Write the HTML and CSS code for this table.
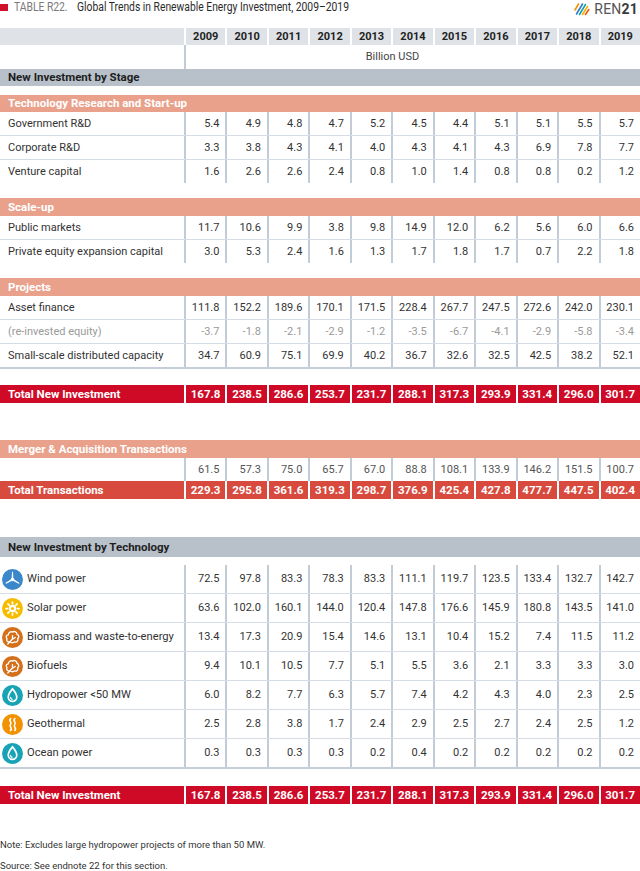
FILE: index.html
```html
<!DOCTYPE html>
<html>
<head>
<meta charset="utf-8">
<link rel="stylesheet" href="styles.css">
</head>
<body>
<div class="top">
  <div class="sq"></div>
  <div class="ttl"><span class="tag">TABLE R22.</span><span class="name">Global Trends in Renewable Energy Investment, 2009–2019</span></div>
  <div class="logo">
    <svg width="16" height="14" viewBox="0 0 16 14">
      <g stroke-width="1.6" stroke-linecap="round">
        <line x1="1" y1="8" x2="4.5" y2="2" stroke="#f39200"/>
        <line x1="2.5" y1="12" x2="8.5" y2="2" stroke="#2f7fc1"/>
        <line x1="5.5" y1="12.5" x2="11.5" y2="2.5" stroke="#1aa0b0"/>
        <line x1="8.5" y1="12.5" x2="13.5" y2="4.5" stroke="#f5b400"/>
        <line x1="11.5" y1="12.5" x2="14.8" y2="7.5" stroke="#e85a1c"/>
      </g>
    </svg>
    <span class="logo-text">REN<b>21</b></span>
  </div>
</div>

<div class="row hdr">
  <div></div><div class="c">2009</div><div class="c">2010</div><div class="c">2011</div><div class="c">2012</div><div class="c">2013</div><div class="c">2014</div><div class="c">2015</div><div class="c">2016</div><div class="c">2017</div><div class="c">2018</div><div class="c">2019</div>
</div>
<div class="row unit"><div></div><div class="span">Billion USD</div></div>
<div class="bar gray h17">New Investment by Stage</div>

<div class="bar salmon h17 mt9">Technology Research and Start-up</div>
<div class="grp">
  <div class="row d"><div class="lbl">Government R&amp;D</div><div class="v">5.4</div><div class="v">4.9</div><div class="v">4.8</div><div class="v">4.7</div><div class="v">5.2</div><div class="v">4.5</div><div class="v">4.4</div><div class="v">5.1</div><div class="v">5.1</div><div class="v">5.5</div><div class="v">5.7</div></div>
  <div class="row d"><div class="lbl">Corporate R&amp;D</div><div class="v">3.3</div><div class="v">3.8</div><div class="v">4.3</div><div class="v">4.1</div><div class="v">4.0</div><div class="v">4.3</div><div class="v">4.1</div><div class="v">4.3</div><div class="v">6.9</div><div class="v">7.8</div><div class="v">7.7</div></div>
  <div class="row d"><div class="lbl">Venture capital</div><div class="v">1.6</div><div class="v">2.6</div><div class="v">2.6</div><div class="v">2.4</div><div class="v">0.8</div><div class="v">1.0</div><div class="v">1.4</div><div class="v">0.8</div><div class="v">0.8</div><div class="v">0.2</div><div class="v">1.2</div></div>
</div>

<div class="bar salmon mt15">Scale-up</div>
<div class="grp">
  <div class="row d"><div class="lbl">Public markets</div><div class="v">11.7</div><div class="v">10.6</div><div class="v">9.9</div><div class="v">3.8</div><div class="v">9.8</div><div class="v">14.9</div><div class="v">12.0</div><div class="v">6.2</div><div class="v">5.6</div><div class="v">6.0</div><div class="v">6.6</div></div>
  <div class="row d"><div class="lbl">Private equity expansion capital</div><div class="v">3.0</div><div class="v">5.3</div><div class="v">2.4</div><div class="v">1.6</div><div class="v">1.3</div><div class="v">1.7</div><div class="v">1.8</div><div class="v">1.7</div><div class="v">0.7</div><div class="v">2.2</div><div class="v">1.8</div></div>
</div>

<div class="bar salmon mt15">Projects</div>
<div class="grp closed">
  <div class="row d"><div class="lbl">Asset finance</div><div class="v">111.8</div><div class="v">152.2</div><div class="v">189.6</div><div class="v">170.1</div><div class="v">171.5</div><div class="v">228.4</div><div class="v">267.7</div><div class="v">247.5</div><div class="v">272.6</div><div class="v">242.0</div><div class="v">230.1</div></div>
  <div class="row d muted"><div class="lbl">(re-invested equity)</div><div class="v">-3.7</div><div class="v">-1.8</div><div class="v">-2.1</div><div class="v">-2.9</div><div class="v">-1.2</div><div class="v">-3.5</div><div class="v">-6.7</div><div class="v">-4.1</div><div class="v">-2.9</div><div class="v">-5.8</div><div class="v">-3.4</div></div>
  <div class="row d"><div class="lbl">Small-scale distributed capacity</div><div class="v">34.7</div><div class="v">60.9</div><div class="v">75.1</div><div class="v">69.9</div><div class="v">40.2</div><div class="v">36.7</div><div class="v">32.6</div><div class="v">32.5</div><div class="v">42.5</div><div class="v">38.2</div><div class="v">52.1</div></div>
</div>

<div class="row tot red mt16"><div class="lbl">Total New Investment</div><div class="v">167.8</div><div class="v">238.5</div><div class="v">286.6</div><div class="v">253.7</div><div class="v">231.7</div><div class="v">288.1</div><div class="v">317.3</div><div class="v">293.9</div><div class="v">331.4</div><div class="v">296.0</div><div class="v">301.7</div></div>

<div class="bar salmon mt37">Merger &amp; Acquisition Transactions</div>
<div class="row d ma"><div class="lbl"></div><div class="v">61.5</div><div class="v">57.3</div><div class="v">75.0</div><div class="v">65.7</div><div class="v">67.0</div><div class="v">88.8</div><div class="v">108.1</div><div class="v">133.9</div><div class="v">146.2</div><div class="v">151.5</div><div class="v">100.7</div></div>
<div class="row tot tomato"><div class="lbl">Total Transactions</div><div class="v">229.3</div><div class="v">295.8</div><div class="v">361.6</div><div class="v">319.3</div><div class="v">298.7</div><div class="v">376.9</div><div class="v">425.4</div><div class="v">427.8</div><div class="v">477.7</div><div class="v">447.5</div><div class="v">402.4</div></div>

<div class="bar gray h20 mt38">New Investment by Technology</div>
<div class="grp tech closed">
  <div class="row d"><div class="lbl"><svg class="ic" viewBox="0 0 24 24"><circle cx="12" cy="12" r="12" fill="#3b87c9"/><g fill="#fff"><path d="M11 12 L11.4 3.4 Q12 2.5 12.6 3.4 L13 12Z"/><path d="M11 12 L11.4 3.4 Q12 2.5 12.6 3.4 L13 12Z" transform="rotate(120 12 12)"/><path d="M11 12 L11.4 3.4 Q12 2.5 12.6 3.4 L13 12Z" transform="rotate(240 12 12)"/><circle cx="12" cy="12" r="2"/></g></svg>Wind power</div><div class="v">72.5</div><div class="v">97.8</div><div class="v">83.3</div><div class="v">78.3</div><div class="v">83.3</div><div class="v">111.1</div><div class="v">119.7</div><div class="v">123.5</div><div class="v">133.4</div><div class="v">132.7</div><div class="v">142.7</div></div>
  <div class="row d"><div class="lbl"><svg class="ic" viewBox="0 0 24 24"><circle cx="12" cy="12" r="12" fill="#f6bd00"/><circle cx="12" cy="12" r="4.2" fill="#fff"/><circle cx="12" cy="12" r="1.8" fill="#f6bd00"/><g stroke="#fff" stroke-width="2" stroke-linecap="round"><line x1="12" y1="4.6" x2="12" y2="6.4"/><line x1="12" y1="17.6" x2="12" y2="19.4"/><line x1="4.6" y1="12" x2="6.4" y2="12"/><line x1="17.6" y1="12" x2="19.4" y2="12"/><line x1="6.8" y1="6.8" x2="8.1" y2="8.1"/><line x1="15.9" y1="15.9" x2="17.2" y2="17.2"/><line x1="6.8" y1="17.2" x2="8.1" y2="15.9"/><line x1="15.9" y1="8.1" x2="17.2" y2="6.8"/></g></svg>Solar power</div><div class="v">63.6</div><div class="v">102.0</div><div class="v">160.1</div><div class="v">144.0</div><div class="v">120.4</div><div class="v">147.8</div><div class="v">176.6</div><div class="v">145.9</div><div class="v">180.8</div><div class="v">143.5</div><div class="v">141.0</div></div>
  <div class="row d"><div class="lbl"><svg class="ic" viewBox="0 0 24 24"><circle cx="12" cy="12" r="12" fill="#d4701a"/><g fill="none" stroke="#fff" stroke-width="1.5" stroke-linejoin="round" stroke-linecap="round"><path d="M9.4 17 C6.2 17.8 4.4 15.3 5.8 13.2 C4 11.9 4.8 8.8 7.3 8.9 C7.2 6.2 9.9 4.7 12 5.8 C14 4.3 17.4 5.6 17.1 8.4 C19.5 8.9 19.9 12.2 17.9 13.3 C19 15.8 16.5 18 14.1 17 C13 18.3 10.8 18.3 9.4 17 Z"/><path d="M6.6 19.4 L12 13.8 M12 13.8 L12 9.8 M12 13.8 L15.2 12"/></g></svg>Biomass and waste-to-energy</div><div class="v">13.4</div><div class="v">17.3</div><div class="v">20.9</div><div class="v">15.4</div><div class="v">14.6</div><div class="v">13.1</div><div class="v">10.4</div><div class="v">15.2</div><div class="v">7.4</div><div class="v">11.5</div><div class="v">11.2</div></div>
  <div class="row d"><div class="lbl"><svg class="ic" viewBox="0 0 24 24"><circle cx="12" cy="12" r="12" fill="#d4701a"/><g fill="none" stroke="#fff" stroke-width="1.5" stroke-linejoin="round" stroke-linecap="round"><path d="M9.4 17 C6.2 17.8 4.4 15.3 5.8 13.2 C4 11.9 4.8 8.8 7.3 8.9 C7.2 6.2 9.9 4.7 12 5.8 C14 4.3 17.4 5.6 17.1 8.4 C19.5 8.9 19.9 12.2 17.9 13.3 C19 15.8 16.5 18 14.1 17 C13 18.3 10.8 18.3 9.4 17 Z"/><path d="M6.6 19.4 L12 13.8 M12 13.8 L12 9.8 M12 13.8 L15.2 12"/></g></svg>Biofuels</div><div class="v">9.4</div><div class="v">10.1</div><div class="v">10.5</div><div class="v">7.7</div><div class="v">5.1</div><div class="v">5.5</div><div class="v">3.6</div><div class="v">2.1</div><div class="v">3.3</div><div class="v">3.3</div><div class="v">3.0</div></div>
  <div class="row d"><div class="lbl"><svg class="ic" viewBox="0 0 24 24"><circle cx="12" cy="12" r="12" fill="#17a3b5"/><g fill="none" stroke="#fff" stroke-linecap="round"><path d="M12 4.4 C12 4.4 7.1 10.2 7.1 13.8 A4.9 4.9 0 0 0 16.9 13.8 C16.9 10.2 12 4.4 12 4.4 Z" stroke-width="1.9"/><path d="M9.8 14.1 A2.4 2.4 0 0 0 11.6 16.4" stroke-width="1.4"/></g></svg>Hydropower &lt;50 MW</div><div class="v">6.0</div><div class="v">8.2</div><div class="v">7.7</div><div class="v">6.3</div><div class="v">5.7</div><div class="v">7.4</div><div class="v">4.2</div><div class="v">4.3</div><div class="v">4.0</div><div class="v">2.3</div><div class="v">2.5</div></div>
  <div class="row d"><div class="lbl"><svg class="ic" viewBox="0 0 24 24"><circle cx="12" cy="12" r="12" fill="#f39200"/><g fill="none" stroke="#fff" stroke-width="1.9" stroke-linecap="round"><path d="M9.8 5.2 C6.8 7.8 12.2 9.4 9.8 12 C7.4 14.6 12.8 16.2 9.8 18.8"/><path d="M14.6 5.2 C11.6 7.8 17 9.4 14.6 12 C12.2 14.6 17.6 16.2 14.6 18.8"/></g></svg>Geothermal</div><div class="v">2.5</div><div class="v">2.8</div><div class="v">3.8</div><div class="v">1.7</div><div class="v">2.4</div><div class="v">2.9</div><div class="v">2.5</div><div class="v">2.7</div><div class="v">2.4</div><div class="v">2.5</div><div class="v">1.2</div></div>
  <div class="row d"><div class="lbl"><svg class="ic" viewBox="0 0 24 24"><circle cx="12" cy="12" r="12" fill="#17a3b5"/><g fill="none" stroke="#fff" stroke-linecap="round"><path d="M12 4.4 C12 4.4 7.1 10.2 7.1 13.8 A4.9 4.9 0 0 0 16.9 13.8 C16.9 10.2 12 4.4 12 4.4 Z" stroke-width="1.9"/><path d="M9.8 14.1 A2.4 2.4 0 0 0 11.6 16.4" stroke-width="1.4"/></g></svg>Ocean power</div><div class="v">0.3</div><div class="v">0.3</div><div class="v">0.3</div><div class="v">0.3</div><div class="v">0.2</div><div class="v">0.4</div><div class="v">0.2</div><div class="v">0.2</div><div class="v">0.2</div><div class="v">0.2</div><div class="v">0.2</div></div>
</div>

<div class="row tot red mt17"><div class="lbl">Total New Investment</div><div class="v">167.8</div><div class="v">238.5</div><div class="v">286.6</div><div class="v">253.7</div><div class="v">231.7</div><div class="v">288.1</div><div class="v">317.3</div><div class="v">293.9</div><div class="v">331.4</div><div class="v">296.0</div><div class="v">301.7</div></div>

<p class="note first">Note: Excludes large hydropower projects of more than 50 MW.</p>
<p class="note">Source: See endnote 22 for this section.</p>
</body>
</html>
```

FILE: styles.css
```css
* { box-sizing: border-box; margin: 0; padding: 0; }
body {
  font-family: Roboto, "Liberation Sans", sans-serif;
  color: #333;
  background: #fff;
  width: 640px;
  font-size: 11px;
}
.top { display: flex; align-items: flex-start; height: 28px; padding-top: 1px; }
.sq { width: 8px; height: 7px; background: #d0112b; margin-top: 3px; margin-right: 6px; flex: none; }
.ttl {
  white-space: nowrap;
  transform: scaleX(0.86);
  transform-origin: 0 0;
  font-size: 12px;
  line-height: 13px;
  width: 330px;
  flex: none;
}
.ttl .tag { color: #7a7a7a; margin-right: 11px; }
.ttl .name { color: #2b2b2b; }
.logo { margin-left: auto; display: flex; align-items: center; gap: 4px; margin-right: 2px; }
.logo-text { font-size: 14px; color: #555; line-height: 16px; letter-spacing: 0.2px; }
.logo-text b { font-weight: 700; color: #3a3a3a; }

.row { display: grid; grid-template-columns: 184px repeat(11, 1fr); }

.hdr { height: 17px; line-height: 17px; font-weight: 700; font-size: 11px; color: #222; }
.hdr > div { background: #dfe3e8; }
.hdr > .c { border-left: 2px solid #fff; text-align: center; }

.unit { height: 24px; line-height: 24px; color: #444; }
.unit .span { grid-column: 2 / span 11; border-left: 2px solid #c2ccd6; text-align: center; padding-right: 41px; }

.bar { height: 18px; line-height: 18px; font-weight: 700; padding-left: 8px; font-size: 11.5px; }
.bar.h17 { height: 17px; line-height: 17px; }
.bar.h20 { height: 20px; line-height: 20px; }
.bar.gray { background: #b8c1ca; color: #1e1e1e; }
.bar.salmon { background: #e9a18c; color: #fff; }

.mt9 { margin-top: 9px; }
.mt15 { margin-top: 15px; }
.mt16 { margin-top: 16px; }
.mt17 { margin-top: 17px; }
.mt37 { margin-top: 37px; }
.mt38 { margin-top: 38px; }

.d { height: 24px; border-bottom: 1px solid #d5dce3; }
.d > div { line-height: 23px; }
.grp .d:last-child { height: 23px; border-bottom: 0; }
.grp.closed .d:last-child { height: 25px; border-bottom: 2px solid #c5ced8; }
.d .lbl { padding-left: 8px; color: #333; white-space: nowrap; }
.d .v { text-align: right; padding-right: 6px; border-left: 2px solid #c2ccd6; color: #333; }
.d.muted .lbl, .d.muted .v { color: #9a9a9a; }
.d.ma { height: 23px; border-bottom: 0; }
.d.ma .v { color: #555; }

.tech { margin-top: 8px; }
.tech .d { height: 29px; }
.tech .d > div { line-height: 28px; }
.tech.closed .d:last-child { height: 30px; }
.tech .lbl { display: flex; align-items: center; padding-left: 2px; font-size: 11.2px; }
.ic { width: 21px; height: 21px; margin-right: 4px; flex: none; }

.tot { height: 18px; line-height: 18px; font-weight: 700; color: #fff; font-size: 11.5px; }
.tot .lbl { padding-left: 8px; }
.tot .v { border-left: 2px solid #fff; text-align: right; padding-right: 5px; }
.tot.red > div { background: #cf0a27; }
.tot.tomato > div { background: #d84a3e; }

.note { font-size: 9.5px; line-height: 12px; color: #333; }
.note.first { margin-top: 35px; }
.note + .note { margin-top: 9px; }
```
